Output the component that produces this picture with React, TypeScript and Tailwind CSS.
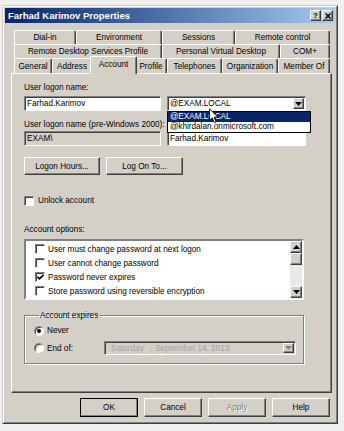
import React from 'react';

// Classic Win2k-style bevels
const raised =
  'border border-t-white border-l-white border-r-[#404040] border-b-[#404040] shadow-[inset_-1px_-1px_0_#808080]';
const sunken =
  'border border-t-[#808080] border-l-[#808080] border-r-white border-b-white shadow-[inset_1px_1px_0_#404040]';

const row1 = [
  { label: 'Dial-in', w: 'w-[62px]' },
  { label: 'Environment', w: 'w-[86px]' },
  { label: 'Sessions', w: 'w-[73px]' },
  { label: 'Remote control', w: 'w-[95px]' },
];
const row2 = [
  { label: 'Remote Desktop Services Profile', w: 'w-[148px]' },
  { label: 'Personal Virtual Desktop', w: 'w-[118px]' },
  { label: 'COM+', w: 'w-[50px]' },
];
const row3 = [
  { label: 'General', w: 'w-[38px]' },
  { label: 'Address', w: 'w-[40px]' },
  { label: 'Account', w: 'w-[43px]', active: true },
  { label: 'Profile', w: 'w-[32px]' },
  { label: 'Telephones', w: 'w-[55px]' },
  { label: 'Organization', w: 'w-[56px]' },
  { label: 'Member Of', w: 'w-[52px]' },
];

const options = [
  { label: 'User must change password at next logon', checked: false },
  { label: 'User cannot change password', checked: false },
  { label: 'Password never expires', checked: true },
  { label: 'Store password using reversible encryption', checked: false },
];

function Tri({ up = false, color = '#000' }: { up?: boolean; color?: string }) {
  return (
    <svg width="7" height="4" viewBox="0 0 7 4">
      <polygon points={up ? '0,4 7,4 3.5,0' : '0,0 7,0 3.5,4'} fill={color} />
    </svg>
  );
}

function CheckBox({ checked }: { checked?: boolean }) {
  return (
    <div className={`${sunken} flex h-[10px] w-[10px] shrink-0 items-center justify-center bg-white`}>
      {checked && (
        <svg width="7" height="6" viewBox="0 0 7 6">
          <polyline points="0.5,2.8 2.5,4.8 6.5,0.8" fill="none" stroke="#000" strokeWidth="1.6" />
        </svg>
      )}
    </div>
  );
}

function Radio({ checked }: { checked?: boolean }) {
  return (
    <div className="flex h-[10px] w-[10px] shrink-0 items-center justify-center rounded-full border border-t-[#808080] border-l-[#808080] border-r-white border-b-white bg-white shadow-[inset_1px_1px_0_#404040]">
      {checked && <div className="h-[4px] w-[4px] rounded-full bg-black" />}
    </div>
  );
}

function Tab({ label, w }: { label: string; w: string }) {
  return (
    <div
      className={`${w} flex h-full items-center justify-center rounded-t-[2px] border-l border-t border-r border-l-white border-t-white border-r-[#404040] shadow-[inset_-1px_0_0_#808080] whitespace-nowrap`}
    >
      {label}
    </div>
  );
}

function Button({ children, className = '', disabled = false }: { children: React.ReactNode; className?: string; disabled?: boolean }) {
  return (
    <div
      className={`${raised} flex items-center justify-center bg-[#d4d0c8] ${disabled ? 'text-[#808080] [text-shadow:1px_1px_0_#fff]' : ''} ${className}`}
    >
      {children}
    </div>
  );
}

function Cursor() {
  return (
    <svg width="10" height="16" viewBox="0 0 11 17" className="absolute left-[42px] top-[12px] z-30">
      <path d="M0.5 0.5 L0.5 13.5 L3.6 10.6 L5.8 15.8 L7.8 15 L5.6 9.8 L9.8 9.8 Z" fill="#fff" stroke="#000" strokeWidth="1" />
    </svg>
  );
}

export default function App() {
  return (
    <div className="h-[431px] w-[344px] overflow-hidden bg-[#efefef] pt-[5px] font-['Liberation_Sans',Arial,sans-serif] text-[8.2px] leading-[11px] text-black">
      {/* Dialog window */}
      <div className="ml-[2px] h-[419px] w-[336px] border border-t-[#d4d0c8] border-l-[#d4d0c8] border-r-[#404040] border-b-[#404040] bg-[#d4d0c8] p-[2px] shadow-[inset_1px_1px_0_white,inset_-1px_-1px_0_#808080]">
        {/* Title bar */}
        <div className="flex h-[15px] items-center justify-between bg-linear-to-r from-[#0a246a] to-[#a6caf0] pl-[3px] pr-[2px]">
          <span className="text-[9.5px] font-bold text-white">Farhad Karimov Properties</span>
          <div className="flex gap-[1px]">
            <Button className="h-[11px] w-[11px]">
              <span className="text-[8px] font-bold leading-none">?</span>
            </Button>
            <Button className="h-[11px] w-[11px]">
              <svg width="6" height="6" viewBox="0 0 6 6">
                <path d="M0.5 0.5 L5.5 5.5 M5.5 0.5 L0.5 5.5" stroke="#000" strokeWidth="1.5" />
              </svg>
            </Button>
          </div>
        </div>

        <div className="ml-[6px] mt-[7px]">
          {/* Tabs */}
          <div className="ml-[3px] w-[316px]">
            <div className="flex h-[14px]">
              {row1.map((t) => (
                <Tab key={t.label} {...t} />
              ))}
            </div>
            <div className="flex h-[14px]">
              {row2.map((t) => (
                <Tab key={t.label} {...t} />
              ))}
            </div>
            <div className="flex h-[15px]">
              {row3.map((t) =>
                t.active ? (
                  <div
                    key={t.label}
                    className="relative z-10 -mx-[2px] -mt-[2px] flex h-[18px] w-[47px] shrink-0 justify-center rounded-t-[2px] border-l border-t border-r border-l-white border-t-white border-r-[#404040] bg-[#d4d0c8] pt-[2px] shadow-[inset_-1px_0_0_#808080]"
                  >
                    {t.label}
                  </div>
                ) : (
                  <Tab key={t.label} label={t.label} w={t.w} />
                ),
              )}
            </div>
          </div>

          {/* Tab panel */}
          <div className={`${raised} h-[320px] w-[321px] pl-[12px] pt-[8px]`}>
            <div>User logon name:</div>
            <div className="mt-[3px] flex gap-[6px]">
              <div className={`${sunken} flex h-[15px] w-[137px] items-center bg-white pl-[2px]`}>Farhad.Karimov</div>
              <div className="relative">
                <div className={`${sunken} flex h-[15px] w-[139px] items-center justify-between bg-white pl-[2px] pr-[1px]`}>
                  <span>@EXAM.LOCAL</span>
                  <Button className="h-[11px] w-[11px]">
                    <Tri />
                  </Button>
                </div>
                {/* open dropdown list */}
                <div className="absolute left-0 top-[15px] z-20 w-[144px] border border-black bg-white">
                  <div className="h-[10px] bg-[#0a246a] pl-[2px] leading-[10px] text-white">@EXAM.LOCAL</div>
                  <div className="h-[10px] pl-[2px] leading-[10px]">@khirdalan.onmicrosoft.com</div>
                </div>
                <Cursor />
              </div>
            </div>

            <div className="mt-[8px] whitespace-nowrap">User logon name (pre-Windows 2000):</div>
            <div className="mt-[1px] flex gap-[6px]">
              <div className={`${sunken} flex h-[15px] w-[137px] items-center bg-[#d4d0c8] pl-[2px]`}>EXAM\</div>
              <div className={`${sunken} flex h-[15px] w-[139px] items-end bg-white pb-[1px] pl-[2px]`}>Farhad.Karimov</div>
            </div>

            <div className="mt-[11px] flex gap-[6px]">
              <Button className="h-[18px] w-[76px]">Logon Hours...</Button>
              <Button className="h-[18px] w-[77px]">Log On To...</Button>
            </div>

            <div className="mt-[20px] flex h-[11px] items-center gap-[4px]">
              <CheckBox />
              <span>Unlock account</span>
            </div>

            <div className="mt-[18px]">Account options:</div>
            <div className={`${sunken} mt-[4px] flex h-[61px] w-[280px] border-2 bg-white shadow-none`}>
              <div className="flex-1 pl-[9px] pt-[1px]">
                {options.map((o) => (
                  <div key={o.label} className="flex h-[14px] items-center gap-[3px]">
                    <CheckBox checked={o.checked} />
                    <span>{o.label}</span>
                  </div>
                ))}
              </div>
              <div className="flex w-[12px] flex-col">
                <Button className="h-[12px] w-[12px]">
                  <Tri up />
                </Button>
                <Button className="h-[12px] w-[12px]">{null}</Button>
                <div className="flex-1 bg-[#ebe9e5]" />
                <Button className="h-[12px] w-[12px]">
                  <Tri />
                </Button>
              </div>
            </div>

            {/* Account expires group */}
            <fieldset className="mt-[10px] w-[280px] border border-[#808080] pb-[8px] pl-[9px] shadow-[inset_1px_1px_0_white,1px_1px_0_white]">
              <legend className="ml-[5px] px-[1px]">Account expires</legend>
              <div className="mt-[4px] flex h-[11px] items-center gap-[3px]">
                <Radio checked />
                <span>Never</span>
              </div>
              <div className="mt-[5px] flex h-[14px] items-center gap-[3px]">
                <Radio />
                <span className="w-[54px]">End of:</span>
                <div className={`${sunken} flex h-[14px] w-[192px] items-center justify-between bg-[#d4d0c8] pl-[6px] pr-[1px] text-[#a0a0a0]`}>
                  <span className="whitespace-pre">Saturday   , September 14, 2013</span>
                  <Button className="h-[10px] w-[11px]">
                    <Tri color="#808080" />
                  </Button>
                </div>
              </div>
            </fieldset>
          </div>

          {/* Dialog buttons */}
          <div className="ml-[69px] mt-[5px] flex gap-[6px]">
            <Button className="h-[19px] w-[58px] outline outline-1 outline-black -outline-offset-1">OK</Button>
            <Button className="h-[19px] w-[58px]">Cancel</Button>
            <Button className="h-[19px] w-[58px]" disabled>
              Apply
            </Button>
            <Button className="h-[19px] w-[58px]">Help</Button>
          </div>
        </div>
      </div>
    </div>
  );
}
